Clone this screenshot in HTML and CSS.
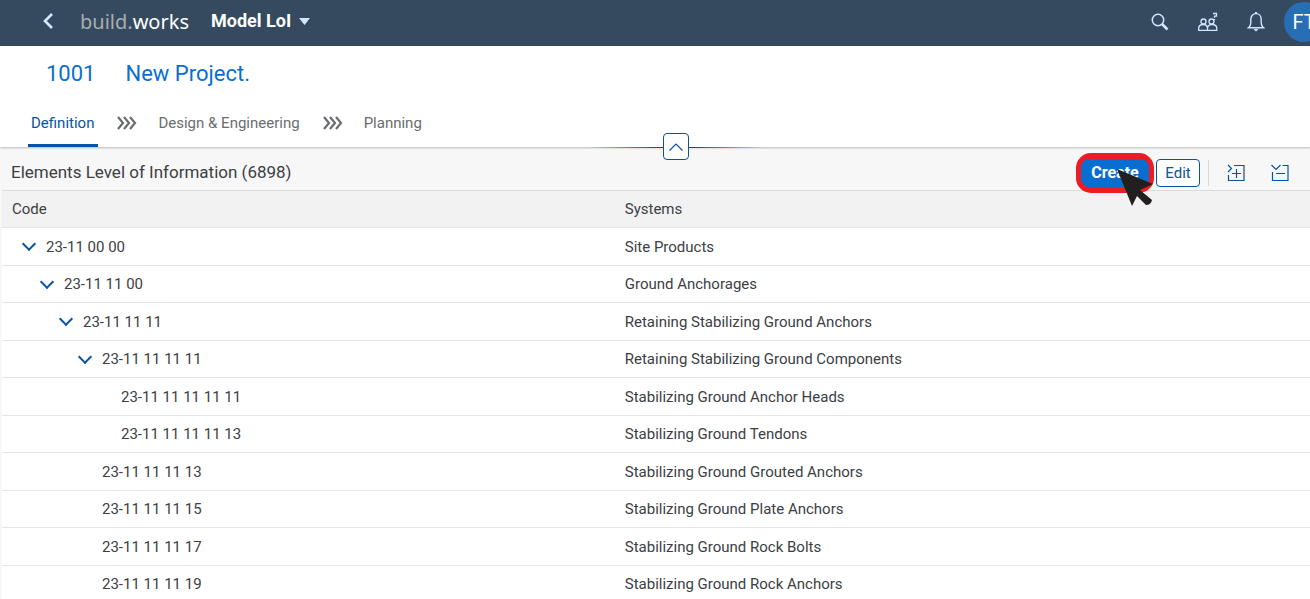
FILE: index.html
```html
<!DOCTYPE html>
<html lang="en">
<head>
<meta charset="utf-8">
<title>Model LoI</title>
<link rel="stylesheet" href="styles.css">
</head>
<body>

<header class="shell">
	<button class="shell-btn back" aria-label="Back">
		<svg width="12" height="18" viewBox="0 0 12 18"><path d="M10 1L3 8l7 7" fill="none" stroke="#d1e8ff" stroke-width="2.6"/></svg>
	</button>
	<a href="#" class="logo"><span>build.</span>works</a>
	<button class="shell-title">Model LoI
		<svg width="12" height="8" viewBox="0 0 12 8"><path d="M0 1h11L5.500 8z" fill="#d1e8ff"/></svg>
	</button>
	<div class="shell-right">
		<button class="shell-btn" aria-label="Search">
			<svg width="18" height="18" viewBox="0 0 18 18" fill="none" stroke="#d1e8ff"><circle cx="7" cy="7" r="5.700" stroke-width="1.500"/><path d="M11 11l5.500 5.500" stroke-width="2.600"/></svg>
		</button>
		<button class="shell-btn" aria-label="Help">
			<svg width="20" height="20" viewBox="0 0 20 20" fill="none" stroke="#d1e8ff" stroke-width="1.300">
				<circle cx="5.500" cy="9.500" r="2.500"/><circle cx="13.500" cy="9.500" r="2.500"/>
				<path d="M.700 18.400v-1.900c0-2.400 2-4 4.600-4s4.200 1.600 4.200 4v1.900zM9.500 18.400h9.300v-1.900c0-2.400-2-4-4.900-4-2.300 0-4.400 1.600-4.400 4"/>
				<path d="M15 1.500h3.500v2.700h-2v1.600M16.500 7v1"/>
			</svg>
		</button>
		<button class="shell-btn" aria-label="Notifications">
			<svg width="18" height="20" viewBox="0 0 18 20"><path d="M1.500 15.800c2-1.400 2.300-2.600 2.300-5V7.500C3.800 4 6 1.600 9 1.600s5.200 2.400 5.200 5.900v3.300c0 2.400.300 3.600 2.300 5z" fill="none" stroke="#d1e8ff" stroke-width="1.400"/><path d="M6.500 17h5L9 19.500zM8 0h2v2H8z" fill="#d1e8ff"/></svg>
		</button>
		<button class="avatar">FT</button>
	</div>
</header>

<section class="page-head">
	<h1><span>1001</span><span>New Project.</span></h1>
	<nav class="tabs">
		<a href="#" class="tab active">Definition</a>
		<svg class="sep" width="20" height="16" viewBox="0 0 20 16"><path d="M1 2l5 6-5 6M7 2l5 6-5 6M13 2l5 6-5 6"/></svg>
		<a href="#" class="tab">Design &amp; Engineering</a>
		<svg class="sep" width="20" height="16" viewBox="0 0 20 16"><path d="M1 2l5 6-5 6M7 2l5 6-5 6M13 2l5 6-5 6"/></svg>
		<a href="#" class="tab">Planning</a>
	</nav>
	<div class="collapse">
		<button aria-label="Collapse header">
			<svg width="14" height="8" viewBox="0 0 14 8"><path d="M.500 7.500L7 1l6.500 6.500" fill="none" stroke="#0854a0" stroke-width="1.200"/></svg>
		</button>
	</div>
</section>

<main>
	<div class="toolbar">
		<h2>Elements Level of Information (6898)</h2>
		<div class="marked">
			<button class="btn primary">Create</button>
			<svg class="pointer" width="36" height="38" viewBox="0 0 36 38"><path d="M0 0l36 15-13 6 12 10q-1 5-6 5l-9-9-5 10z" fill="#231f20"/></svg>
		</div>
		<button class="btn">Edit</button>
		<span class="divider"></span>
		<button class="icon-btn" aria-label="Expand">
			<svg width="18" height="18" viewBox="0 0 18 18"><path d="M1 1l3.500 3.500L1 8M7 1.500h10v15H1.500V11M9.500 5v9M5 9.500h9"/></svg>
		</button>
		<button class="icon-btn" aria-label="Collapse">
			<svg width="18" height="18" viewBox="0 0 18 18"><path d="M.500 1L5 5.500 9.500 1M11.500 1.500H17v15H1.500V8M5 9.500h9"/></svg>
		</button>
	</div>

	<table class="tree">
		<thead>
			<tr><th class="code">Code</th><th>Systems</th></tr>
		</thead>
		<tbody>
			<tr><td class="l1"><button class="toggle" aria-label="Collapse row"></button>23-11 00 00</td><td>Site Products</td></tr>
			<tr><td class="l2"><button class="toggle" aria-label="Collapse row"></button>23-11 11 00</td><td>Ground Anchorages</td></tr>
			<tr><td class="l3"><button class="toggle" aria-label="Collapse row"></button>23-11 11 11</td><td>Retaining Stabilizing Ground Anchors</td></tr>
			<tr><td class="l4"><button class="toggle" aria-label="Collapse row"></button>23-11 11 11 11</td><td>Retaining Stabilizing Ground Components</td></tr>
			<tr><td class="l5 leaf">23-11 11 11 11 11</td><td>Stabilizing Ground Anchor Heads</td></tr>
			<tr><td class="l5 leaf">23-11 11 11 11 13</td><td>Stabilizing Ground Tendons</td></tr>
			<tr><td class="l4 leaf">23-11 11 11 13</td><td>Stabilizing Ground Grouted Anchors</td></tr>
			<tr><td class="l4 leaf">23-11 11 11 15</td><td>Stabilizing Ground Plate Anchors</td></tr>
			<tr><td class="l4 leaf">23-11 11 11 17</td><td>Stabilizing Ground Rock Bolts</td></tr>
			<tr><td class="l4 leaf">23-11 11 11 19</td><td>Stabilizing Ground Rock Anchors</td></tr>
		</tbody>
	</table>
</main>

</body>
</html>
```

FILE: styles.css
```css
* {
	box-sizing: border-box;
}

body {
	margin: 0;
	height: 100vh;
	overflow: hidden;
	background: #f7f7f7;
	color: #3c4044;
	font: 15px/20px Roboto, "Liberation Sans", sans-serif;
}

button {
	margin: 0;
	padding: 0;
	border: 0;
	background: none;
	font: inherit;
	cursor: pointer;
}

a {
	text-decoration: none;
}

svg {
	display: block;
}

/* shell bar */
.shell {
	display: flex;
	align-items: center;
	height: 46px;
	padding: 0 0 2px 32px;
	background: #354a5f;
	overflow: hidden;
}

.shell-btn {
	display: flex;
	align-items: center;
	justify-content: center;
	width: 32px;
	height: 32px;
}

.logo {
	margin-left: 16px;
	color: #fff;
	font: 20px/24px "Noto Sans", sans-serif;
}

.logo span {
	color: #a9adb2;
}

.shell-title {
	display: flex;
	align-items: center;
	gap: 8px;
	margin-left: 22px;
	padding-bottom: 2px;
	color: #fff;
	font-size: 18px;
	font-weight: bold;
}

.shell-right {
	display: flex;
	align-items: center;
	gap: 16px;
	margin-left: auto;
	margin-right: -14px;
}

.avatar {
	width: 40px;
	height: 40px;
	margin-left: -4px;
	border-radius: 50%;
	background: #286eb4;
	color: #fff;
	font-size: 20px;
}

/* project header */
.page-head {
	position: relative;
	height: 101px;
	background: #fff;
	box-shadow: 0 1px 2px rgba(0, 0, 0, .25);
}

h1 {
	display: flex;
	gap: 30px;
	margin: 0;
	padding: 14px 46px 0;
	color: #0a6ed1;
	font-size: 22px;
	font-weight: normal;
	line-height: 28px;
}

.tabs {
	display: flex;
	align-items: center;
	margin-top: 11px;
	padding-left: 28px;
}

.tab {
	height: 48px;
	padding: 0 4px 0 3px;
	color: #6a6d70;
	line-height: 48px;
}

.tab.active {
	color: #0854a0;
	border-bottom: 3px solid #0854a0;
}

.sep {
	margin: 0 18px 0 19px;
	fill: none;
	stroke: #6a6d70;
	stroke-width: 2.2;
}

.collapse {
	position: absolute;
	left: 0;
	right: 0;
	bottom: -13px;
	display: flex;
	justify-content: center;
	padding-left: 42px;
	background: linear-gradient(90deg, transparent, #0854a0 40%, #0854a0 60%, transparent) 588px 14px / 176px 1px no-repeat;
}

.collapse button {
	display: flex;
	align-items: center;
	justify-content: center;
	width: 26px;
	height: 27px;
	background: #fff;
	border: 1px solid #0854a0;
	border-radius: 4px;
}

/* toolbar */
.toolbar {
	display: flex;
	align-items: center;
	height: 43px;
	padding: 8px 18px 0 11px;
}

h2 {
	margin: 0 auto 0 0;
	padding-bottom: 2px;
	font-size: 17px;
	font-weight: normal;
	line-height: 20px;
}

.btn {
	height: 28px;
	width: 44px;
	background: #fff;
	border: 1px solid #0854a0;
	border-radius: 4px;
	color: #0854a0;
}

.btn.primary {
	display: block;
	width: 68px;
	background: #0a6ed1;
	border-color: #0a6ed1;
	border-radius: 8px;
	color: #fff;
	font-size: 16px;
	font-weight: bold;
}

.marked {
	position: relative;
	margin-right: 2px;
	border: 5px solid #ed1c24;
	border-width: 6px 5px;
	border-radius: 15px;
	background: #ed1c24;
}

.pointer {
	position: absolute;
	left: 36px;
	top: 10px;
	z-index: 1;
}

.divider {
	width: 1px;
	height: 26px;
	margin: 0 10px 0 8px;
	background: #d9d9d9;
}

.icon-btn {
	padding: 4px 8px;
}

.icon-btn + .icon-btn {
	margin-left: 10px;
	padding-right: 3px;
}

.icon-btn path {
	fill: none;
	stroke: #0854a0;
	stroke-width: 1.2;
}

/* tree table */
.tree {
	width: calc(100% - 2px);
	margin-left: 2px;
	border-collapse: separate;
	border-spacing: 0;
	table-layout: fixed;
	background: #fff;
}

th,
td {
	height: 37px;
	padding: 0 8px;
	border-bottom: 1px solid #e5e5e5;
	text-align: left;
	font-weight: normal;
}

th {
	height: 38px;
	background: #f2f2f2;
	border-top: 1px solid #d9d9d9;
}

tbody tr:nth-child(odd) td {
	height: 38px;
}

.code {
	width: 47%;
	padding-left: 10px;
}

.l1 { padding-left: 20px; }
.l2 { padding-left: 38px; }
.l3 { padding-left: 57px; }
.l4 { padding-left: 76px; }
.l5 { padding-left: 95px; }

.l4.leaf { padding-left: 100px; }
.l5.leaf { padding-left: 119px; }

.toggle {
	width: 12px;
	height: 12px;
	margin-right: 12px;
}

.toggle::before {
	content: "";
	display: block;
	width: 8px;
	height: 8px;
	margin: -3px 0 0 2px;
	border: solid #0854a0;
	border-width: 0 2px 2px 0;
	transform: rotate(45deg);
}
```
